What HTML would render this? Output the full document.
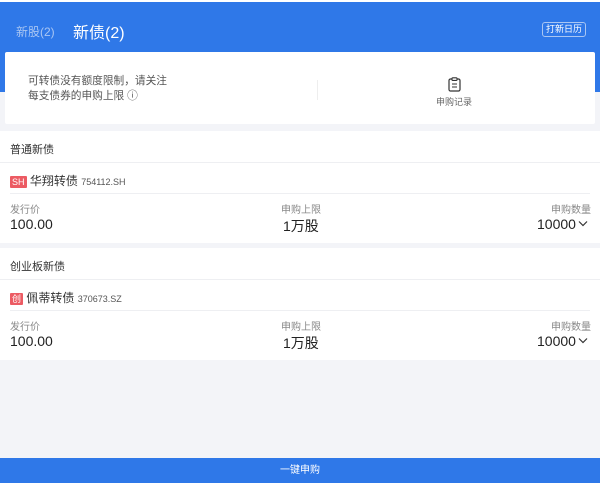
<!DOCTYPE html>
<html><head><meta charset="utf-8"><style>
*{margin:0;padding:0;box-sizing:border-box}
body{width:600px;height:486px;background:#f3f4f8;font-family:"Liberation Sans","Noto Sans CJK SC",sans-serif;position:relative;overflow:hidden;color:#333}
.a{position:absolute;white-space:nowrap}
.hdr{position:absolute;left:0;top:2px;width:600px;height:90px;background:#2f78e8}
.card{position:absolute;left:5px;top:52px;width:590px;height:72px;background:#fff;border-radius:2px}
.sec{position:absolute;left:0;width:600px;height:112px;background:#fff}
.line{position:absolute;height:1px;background:#eeeff2}
.lbl{font-size:10px;color:#888}
.val{font-size:14px;color:#222}
.tag{display:inline-block;font-size:9px;color:#fff;background:#ec5b63;padding:0 2px;line-height:12px;border-radius:1px}
</style></head><body>
<div class="a" style="left:0;top:0;width:600px;height:2px;background:#fff"></div>
<div class="hdr"></div>
<div class="a" style="left:16px;top:23px;font-size:12px;color:#a9c6f3">新股(2)</div>
<div class="a" style="left:73px;top:19px;font-size:16px;color:#fff">新债(2)</div>
<div class="a" style="left:542px;top:22px;width:44px;height:15px;border:1px solid #a9c6f3;border-radius:3px;font-size:9px;color:#fff;text-align:center;line-height:13px">打新日历</div>
<div class="card"></div>
<div class="a" style="left:28px;top:74px;font-size:10.7px;color:#555;line-height:15px">可转债没有额度限制，请关注<br>每支债券的申购上限 ⓘ</div>
<div class="a" style="left:317px;top:80px;width:1px;height:20px;background:#eee"></div>
<svg class="a" style="left:448px;top:77px" width="13" height="15" viewBox="0 0 13 15"><rect x="1" y="2" width="11" height="12" rx="1.5" fill="none" stroke="#333" stroke-width="1.2"/><rect x="4" y="0.8" width="5" height="2.6" rx=".8" fill="#fff" stroke="#333" stroke-width="1.1"/><path d="M4 7h5M4 10h5" stroke="#333" stroke-width="1.1"/></svg>
<div class="a" style="left:436px;top:95px;font-size:9px;color:#666">申购记录</div>

<div class="sec" style="top:131px"></div>
<div class="a" style="left:10px;top:141px;font-size:11px">普通新债</div>
<div class="line" style="left:0;top:162px;width:600px"></div>
<div class="a" style="left:10px;top:172px;font-size:12px"><span class="tag">SH</span> 华翔转债 <span style="font-size:9px;color:#555">754112.SH</span></div>
<div class="line" style="left:10px;top:193px;width:580px"></div>
<div class="a lbl" style="left:10px;top:201px">发行价</div>
<div class="a lbl" style="left:281px;top:201px">申购上限</div>
<div class="a lbl" style="left:551px;top:201px">申购数量</div>
<div class="a val" style="left:10px;top:216px">100.00</div>
<div class="a val" style="left:283px;top:216px">1万股</div>
<div class="a val" style="left:537px;top:216px">10000</div>
<svg class="a" style="left:578px;top:220px" width="10" height="7" viewBox="0 0 10 7"><path d="M1 1.5l4 4 4-4" fill="none" stroke="#333" stroke-width="1.2"/></svg>

<div class="sec" style="top:248px"></div>
<div class="a" style="left:10px;top:258px;font-size:11px">创业板新债</div>
<div class="line" style="left:0;top:279px;width:600px"></div>
<div class="a" style="left:10px;top:289px;font-size:12px"><span class="tag">创</span> 佩蒂转债 <span style="font-size:9px;color:#555">370673.SZ</span></div>
<div class="line" style="left:10px;top:310px;width:580px"></div>
<div class="a lbl" style="left:10px;top:318px">发行价</div>
<div class="a lbl" style="left:281px;top:318px">申购上限</div>
<div class="a lbl" style="left:551px;top:318px">申购数量</div>
<div class="a val" style="left:10px;top:333px">100.00</div>
<div class="a val" style="left:283px;top:333px">1万股</div>
<div class="a val" style="left:537px;top:333px">10000</div>
<svg class="a" style="left:578px;top:337px" width="10" height="7" viewBox="0 0 10 7"><path d="M1 1.5l4 4 4-4" fill="none" stroke="#333" stroke-width="1.2"/></svg>

<div class="a" style="left:0;top:458px;width:600px;height:25px;background:#2f78e8;color:#fff;font-size:10px;text-align:center;line-height:25px">一键申购</div>
<div class="a" style="left:0;top:483px;width:600px;height:3px;background:#fff"></div>
</body></html>
